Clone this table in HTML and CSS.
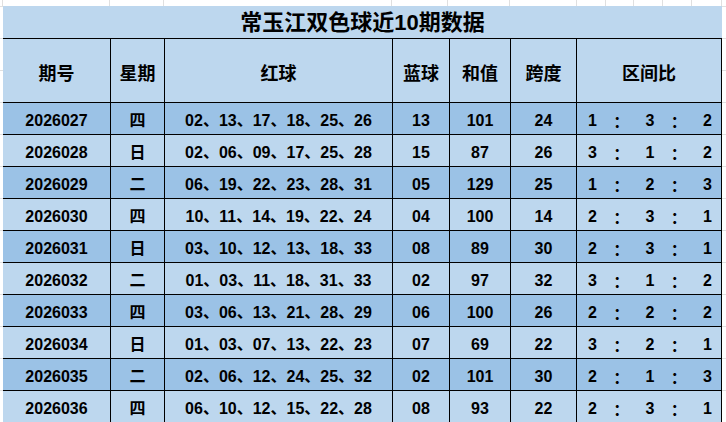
FILE: index.html
```html
<!DOCTYPE html>
<html lang="zh-CN">
<head>
<meta charset="utf-8">
<title>常玉江双色球近10期数据</title>
<link rel="stylesheet" href="styles.css">
</head>
<body>
<div class="page">
  <div class="topgrid">
    <span class="g" style="width:3px"></span>
    <span class="g" style="width:107px"></span>
    <span class="g" style="width:54px"></span>
    <span class="g" style="width:228px"></span>
    <span class="g" style="width:56px"></span>
    <span class="g" style="width:62px"></span>
    <span class="g" style="width:67px"></span>
    <span class="g" style="width:29px"></span>
    <span class="g" style="width:28px"></span>
    <span class="g" style="width:29px"></span>
    <span class="g" style="width:29px"></span>
    <span class="g" style="width:30px"></span>
  </div>
  <div class="sheet">
    <div class="title">常玉江双色球近10期数据</div>
    <div class="row head">
      <div class="c">期号</div><div class="c">星期</div><div class="c">红球</div><div class="c">蓝球</div><div class="c">和值</div><div class="c">跨度</div><div class="c">区间比</div>
    </div>
    <div class="row dark"><div class="c">2026027</div><div class="c">四</div><div class="c">02、13、17、18、25、26</div><div class="c">13</div><div class="c">101</div><div class="c">24</div><div class="c ratio"><span>1</span><span class="col">：</span><span>3</span><span class="col">：</span><span>2</span></div></div>
    <div class="row light"><div class="c">2026028</div><div class="c">日</div><div class="c">02、06、09、17、25、28</div><div class="c">15</div><div class="c">87</div><div class="c">26</div><div class="c ratio"><span>3</span><span class="col">：</span><span>1</span><span class="col">：</span><span>2</span></div></div>
    <div class="row dark"><div class="c">2026029</div><div class="c">二</div><div class="c">06、19、22、23、28、31</div><div class="c">05</div><div class="c">129</div><div class="c">25</div><div class="c ratio"><span>1</span><span class="col">：</span><span>2</span><span class="col">：</span><span>3</span></div></div>
    <div class="row light"><div class="c">2026030</div><div class="c">四</div><div class="c">10、11、14、19、22、24</div><div class="c">04</div><div class="c">100</div><div class="c">14</div><div class="c ratio"><span>2</span><span class="col">：</span><span>3</span><span class="col">：</span><span>1</span></div></div>
    <div class="row dark"><div class="c">2026031</div><div class="c">日</div><div class="c">03、10、12、13、18、33</div><div class="c">08</div><div class="c">89</div><div class="c">30</div><div class="c ratio"><span>2</span><span class="col">：</span><span>3</span><span class="col">：</span><span>1</span></div></div>
    <div class="row light"><div class="c">2026032</div><div class="c">二</div><div class="c">01、03、11、18、31、33</div><div class="c">02</div><div class="c">97</div><div class="c">32</div><div class="c ratio"><span>3</span><span class="col">：</span><span>1</span><span class="col">：</span><span>2</span></div></div>
    <div class="row dark"><div class="c">2026033</div><div class="c">四</div><div class="c">03、06、13、21、28、29</div><div class="c">06</div><div class="c">100</div><div class="c">26</div><div class="c ratio"><span>2</span><span class="col">：</span><span>2</span><span class="col">：</span><span>2</span></div></div>
    <div class="row light"><div class="c">2026034</div><div class="c">日</div><div class="c">01、03、07、13、22、23</div><div class="c">07</div><div class="c">69</div><div class="c">22</div><div class="c ratio"><span>3</span><span class="col">：</span><span>2</span><span class="col">：</span><span>1</span></div></div>
    <div class="row dark"><div class="c">2026035</div><div class="c">二</div><div class="c">02、06、12、24、25、32</div><div class="c">02</div><div class="c">101</div><div class="c">30</div><div class="c ratio"><span>2</span><span class="col">：</span><span>1</span><span class="col">：</span><span>3</span></div></div>
    <div class="row light"><div class="c">2026036</div><div class="c">四</div><div class="c">06、10、12、15、22、28</div><div class="c">08</div><div class="c">93</div><div class="c">22</div><div class="c ratio"><span>2</span><span class="col">：</span><span>3</span><span class="col">：</span><span>1</span></div></div>
  </div>
</div>
</body>
</html>
```

FILE: styles.css
```css
html, body {
  margin: 0;
  padding: 0;
  background: #ffffff;
}

body {
  width: 726px;
  height: 422px;
  overflow: hidden;
  font-family: "Liberation Sans", "Noto Sans CJK SC", sans-serif;
  color: #000000;
}

.page {
  width: 726px;
  height: 422px;
  overflow: hidden;
  background-image: repeating-linear-gradient(to bottom, #e0e0e0 0, #e0e0e0 1px, transparent 1px, transparent 32px);
  background-position: 0 6px;
}

.topgrid {
  display: flex;
  height: 6px;
  background: #ffffff;
}

.topgrid .g {
  display: block;
  flex: none;
  height: 6px;
  box-sizing: border-box;
  border-right: 1px solid #e0e0e0;
}

.sheet {
  margin-left: 3px;
  width: 719px;
}

.title {
  height: 32px;
  background: #bdd7ee;
  display: flex;
  align-items: center;
  justify-content: center;
  font-size: 22px;
  font-weight: bold;
  line-height: 26px;
  padding-top: 1px;
  box-sizing: border-box;
}

.row {
  display: grid;
  grid-template-columns: 108px 54px 228px 57px 61px 66px 145px;
  height: 32px;
}

.row.head {
  height: 64px;
  background: #bdd7ee;
}

.row.dark {
  background: #9bc2e6;
}

.row.light {
  background: #bdd7ee;
}

.c {
  box-sizing: border-box;
  border-top: 1px solid #000000;
  border-right: 1px solid #000000;
  display: flex;
  align-items: center;
  justify-content: center;
  font-size: 16px;
  font-weight: bold;
  line-height: 20px;
  padding-top: 4px;
  white-space: nowrap;
}

.row.head .c {
  font-size: 18px;
  line-height: 22px;
  padding-top: 6px;
}

.c.ratio {
  justify-content: space-between;
  padding-left: 11px;
  padding-right: 9px;
}

.ratio .col {
  font-family: "Noto Sans CJK SC", sans-serif;
  width: 16px;
}
```
